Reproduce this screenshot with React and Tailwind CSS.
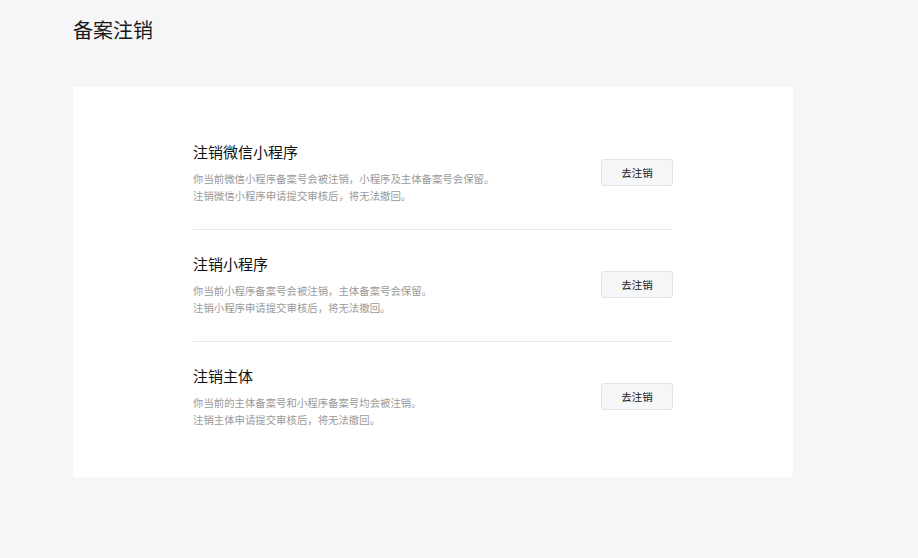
export default function App() {
  const items = [
    {
      title: "注销微信小程序",
      lines: ["你当前微信小程序备案号会被注销，小程序及主体备案号会保留。", "注销微信小程序申请提交审核后，将无法撤回。"],
    },
    {
      title: "注销小程序",
      lines: ["你当前小程序备案号会被注销，主体备案号会保留。", "注销小程序申请提交审核后，将无法撤回。"],
    },
    {
      title: "注销主体",
      lines: ["你当前的主体备案号和小程序备案号均会被注销。", "注销主体申请提交审核后，将无法撤回。"],
    },
  ];
  return (
    <div
      className="w-[918px] h-[558px] bg-[#f5f6f8] overflow-hidden"
      style={{ fontFamily: '"Noto Sans CJK SC", "Noto Sans", sans-serif' }}
    >
      <div className="pl-[73px] pt-[16px]">
        <h1 className="text-[20px] leading-[28px] text-[#1a1a1a] font-normal">备案注销</h1>
        <div className="mt-[43px] w-[720px] h-[390px] bg-white rounded-[3px] px-[120px] pt-[31px]">
          {items.map((it, i) => (
            <div
              key={i}
              className={
                "flex items-center justify-between pt-[23px] pb-[25px] " +
                (i < items.length - 1 ? "border-b border-[#e7e7e7]" : "")
              }
            >
              <div>
                <div className="text-[15px] leading-[22px] text-[#111]">{it.title}</div>
                <div className="mt-[7px] text-[10.4px] leading-[17px] text-[#9a9a9a]">
                  {it.lines.map((l, j) => (
                    <div key={j}>{l}</div>
                  ))}
                </div>
              </div>
              <button className="w-[72px] h-[27px] bg-[#f5f6f8] border border-[#e2e3e5] rounded-[3px] text-[10.5px] text-[#222]">
                去注销
              </button>
            </div>
          ))}
        </div>
      </div>
    </div>
  );
}
